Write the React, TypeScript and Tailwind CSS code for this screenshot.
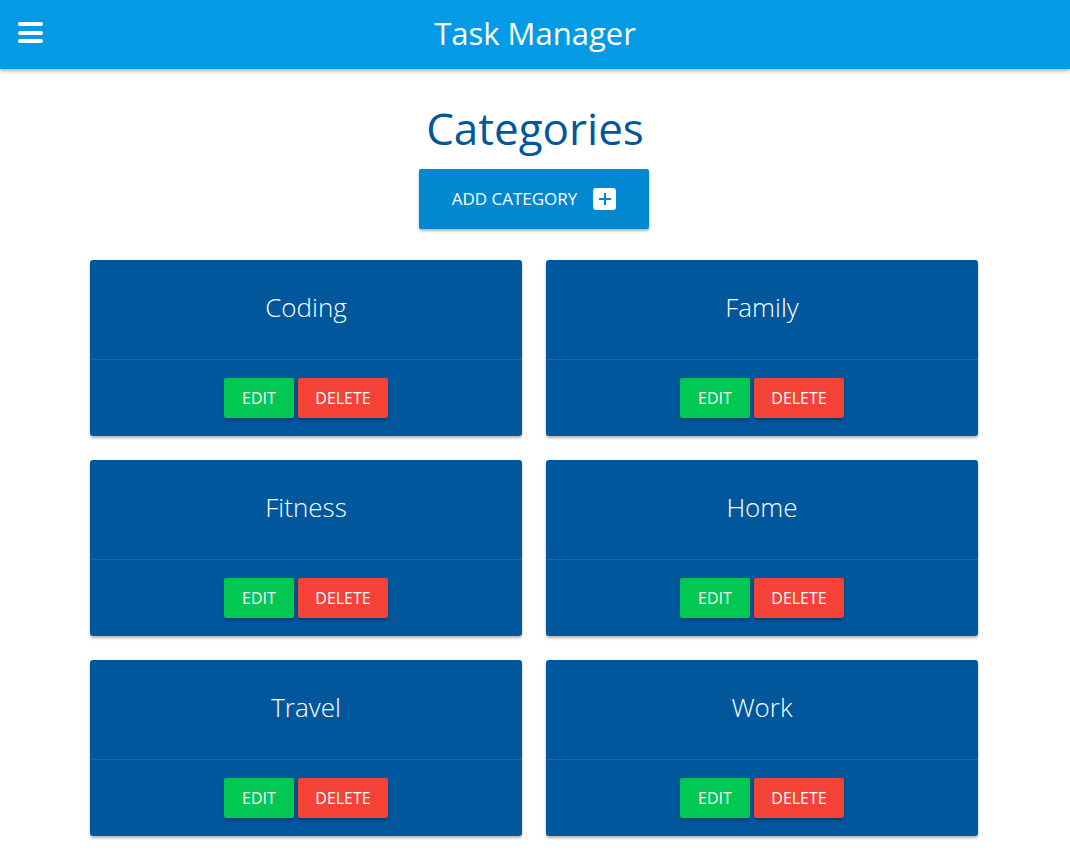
import React from "react";

const categories = ["Coding", "Family", "Fitness", "Home", "Travel", "Work"];

function Card({ name }: { name: string }) {
  return (
    <div className="bg-[#01579b] rounded-[3px] shadow-[0_2px_3px_rgba(0,0,0,0.3)] flex flex-col">
      <div className="h-[100px] flex items-center justify-center border-b border-[#1a68a5]">
        <span className="text-white text-[26px] font-light leading-none pb-[6px]">{name}</span>
      </div>
      <div className="flex justify-center gap-[4px] pt-[18px] pb-[18px]">
        <button className="w-[70px] h-[40px] bg-[#00c853] text-white text-[16px] rounded-[2px] shadow-[0_2px_3px_rgba(0,0,0,0.3)] uppercase">
          Edit
        </button>
        <button className="w-[90px] h-[40px] bg-[#f44336] text-white text-[16px] rounded-[2px] shadow-[0_2px_3px_rgba(0,0,0,0.3)] uppercase">
          Delete
        </button>
      </div>
    </div>
  );
}

export default function App() {
  return (
    <div className="min-h-[853px] bg-white" style={{ fontFamily: '"Open Sans", "Noto Sans", sans-serif' }}>
      <header className="h-[69px] bg-[#039be5] shadow-[0_2px_4px_rgba(0,0,0,0.3)] relative flex items-center justify-center">
        <button className="absolute left-[18px] top-[22px]" aria-label="menu">
          <svg width="25" height="22" viewBox="0 0 25 22">
            <rect x="0" y="0" width="25" height="4" rx="2" fill="white" />
            <rect x="0" y="9" width="25" height="4" rx="2" fill="white" />
            <rect x="0" y="17" width="25" height="4" rx="2" fill="white" />
          </svg>
        </button>
        <h1 className="text-white text-[31px] leading-none pb-[2px]">Task Manager</h1>
      </header>
      <main className="flex flex-col items-center">
        <h2 className="text-[#01579b] text-[44px] leading-none mt-[37px]">Categories</h2>
        <button className="mt-[19px] ml-[-2px] w-[230px] h-[60px] bg-[#0288d1] rounded-[2px] shadow-[0_2px_3px_rgba(0,0,0,0.3)] text-white text-[17px] flex items-center justify-center gap-[16px]">
          <span>ADD CATEGORY</span>
          <span className="w-[23px] h-[22px] bg-white rounded-[3px] flex items-center justify-center">
            <svg width="12" height="12" viewBox="0 0 12 12">
              <rect x="5" y="0" width="2" height="12" fill="#0288d1" />
              <rect x="0" y="5" width="12" height="2" fill="#0288d1" />
            </svg>
          </span>
        </button>
        <div className="self-start ml-[90px] w-[888px] grid grid-cols-2 gap-x-[24px] gap-y-[24px] mt-[31px] mb-[16px]">
          {categories.map((c) => (
            <Card key={c} name={c} />
          ))}
        </div>
      </main>
    </div>
  );
}
